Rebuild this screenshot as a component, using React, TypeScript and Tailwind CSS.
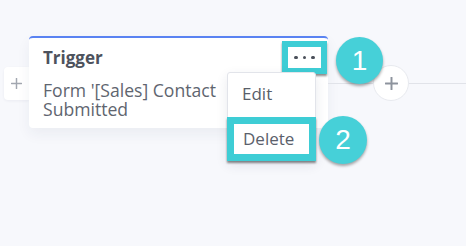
import React from "react";

function Plus({ size, color, stroke }: { size: number; color: string; stroke: number }) {
  return (
    <svg width={size} height={size} viewBox="0 0 12 12" fill="none">
      <path d="M6 0.5V11.5M0.5 6H11.5" stroke={color} strokeWidth={stroke} strokeLinecap="round" />
    </svg>
  );
}

function Badge({ n, className }: { n: string; className: string }) {
  return (
    <div
      className={`absolute rounded-full bg-[#46d0d8] flex items-center justify-center text-white text-[28px] leading-none shadow-[0_2px_3px_rgba(0,0,0,0.35)] ${className}`}
      style={{ fontFamily: '"Liberation Sans", Arial, sans-serif' }}
    >
      {n}
    </div>
  );
}

export default function App() {
  return (
    <div
      className="relative w-[466px] h-[246px] overflow-hidden bg-[#f7f8fc]"
      style={{ fontFamily: '"Open Sans", "Liberation Sans", sans-serif' }}
    >
      {/* workflow row: add tab, node card, connector, add circle */}
      <div className="absolute left-[4px] top-[36px] right-0 flex items-start">
        <div className="mt-[31px] w-[25px] h-[33px] bg-white rounded-l-[4px] flex items-center justify-center shadow-[0_1px_3px_rgba(30,40,80,0.06)]">
          <Plus size={11} color="#a2a7b0" stroke={1.6} />
        </div>
        <div className="w-[299px] h-[92px] bg-white rounded-[4px] border-t-[2px] border-[#5a83f2] shadow-[0_6px_14px_rgba(40,50,90,0.06)] pl-[14px] pt-[10px] flex flex-col">
          <div className="text-[17px] leading-[20px] font-bold text-[#4d525d]">Trigger</div>
          <div className="mt-[13px] text-[17.6px] leading-[19px] text-[#60656f]">
            <div>Form '[Sales] Contact</div>
            <div>Submitted</div>
          </div>
        </div>
        <div className="flex-1 flex items-center mt-[29px]">
          <div className="w-[45px] h-px bg-[#e1e3e9]" />
          <div className="w-[36px] h-[36px] shrink-0 rounded-full bg-white border border-[#e8eaef] flex items-center justify-center">
            <Plus size={13} color="#8d939d" stroke={1.8} />
          </div>
          <div className="flex-1 h-px bg-[#e1e3e9]" />
        </div>
      </div>

      {/* dots button highlight */}
      <div className="absolute left-[282px] top-[41px] w-[45px] h-[33px] border-[6px] border-[#3ecdd5] bg-white flex items-center justify-center gap-[5px] shadow-[0_2px_2px_rgba(0,0,0,0.45)]">
        <span className="w-[3.5px] h-[3.5px] rounded-full bg-[#4a4f59]" />
        <span className="w-[3.5px] h-[3.5px] rounded-full bg-[#4a4f59]" />
        <span className="w-[3.5px] h-[3.5px] rounded-full bg-[#4a4f59]" />
      </div>

      <Badge n="1" className="left-[336px] top-[37px] w-[47px] h-[47px]" />

      {/* dropdown menu */}
      <div className="absolute left-[227px] top-[72px] w-[89px] bg-white rounded-[3px] border border-[#e2e4ea] shadow-[0_4px_12px_rgba(40,50,90,0.10)] flex flex-col">
        <div className="h-[44px] pl-[14px] pb-[4px] flex items-center text-[17px] leading-none text-[#585e69]">Edit</div>
        <div className="-mx-px -mb-px h-[44px] border-[7px] border-[#3ecdd5] bg-white flex items-center pl-[9px] pb-[2px] text-[17px] leading-none text-[#5a606b] shadow-[0_2px_2px_rgba(0,0,0,0.45)]">
          Delete
        </div>
      </div>

      <Badge n="2" className="left-[319px] top-[116px] w-[48px] h-[48px]" />
    </div>
  );
}
